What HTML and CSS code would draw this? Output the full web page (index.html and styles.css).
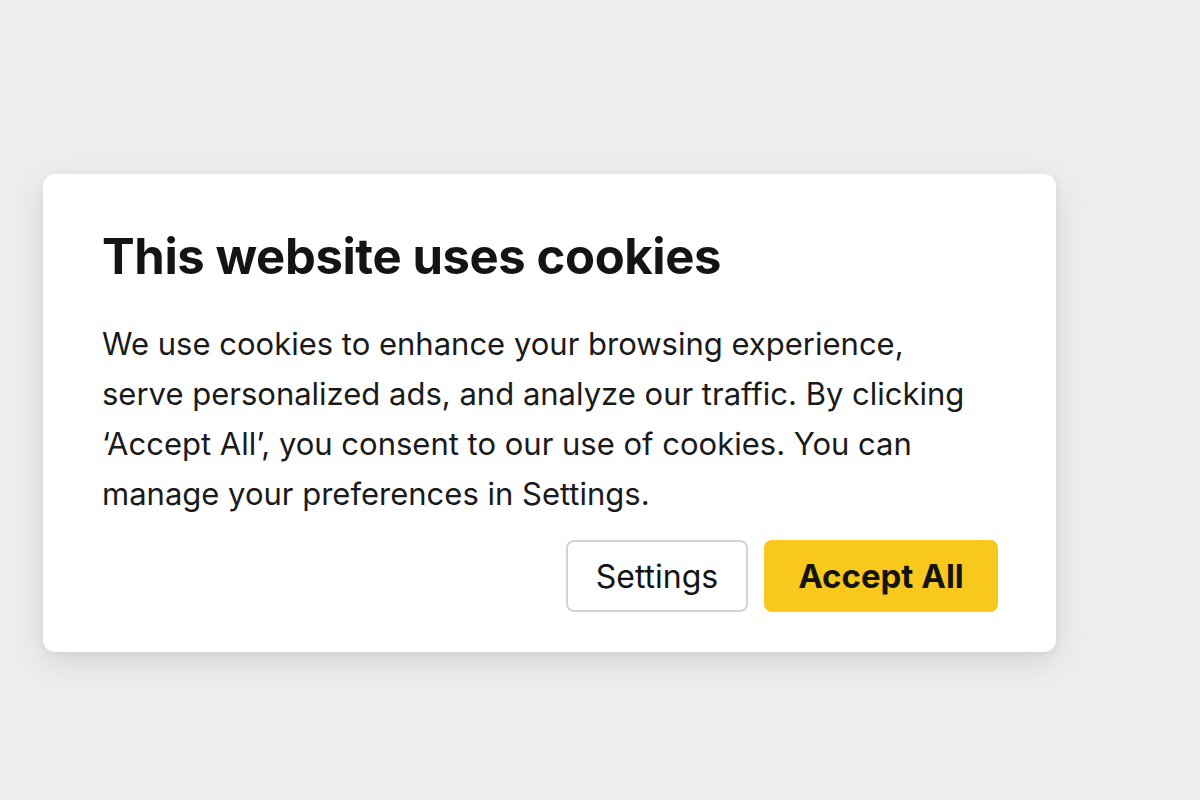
FILE: index.html
```html
<!DOCTYPE html>
<html lang="en">
<head>
    <meta charset="UTF-8">
    <meta name="viewport" content="width=device-width, initial-scale=1.0">
    <title>Cookie Consent</title>
    <link rel="stylesheet" href="styles.css">
</head>
<body>

    <div class="page">
        <div class="cookie-card">
            <h1>This website uses cookies</h1>
            <p>We use cookies to enhance your browsing experience, serve personalized ads, and analyze our traffic. By clicking &lsquo;Accept All&rsquo;, you consent to our use of cookies. You can manage your preferences in Settings.</p>
            <div class="actions">
                <button class="btn btn-settings">Settings</button>
                <button class="btn btn-accept">Accept All</button>
            </div>
        </div>
    </div>

</body>
</html>
```

FILE: styles.css
```css
body {
    margin: 0;
    background-color: #eeedeb;
    font-family: Inter, "Noto Sans", Arial, sans-serif;
    color: #1a1a1a;
}
.page {
    padding: 174px 0 0 43px;
    height: 800px;
    box-sizing: border-box;
}
.cookie-card {
    width: 1013px;
    box-sizing: border-box;
    padding: 53px 58px 40px 59px;
    background-color: #ffffff;
    border-radius: 12px;
    box-shadow: 0 10px 30px rgba(0, 0, 0, 0.10), 0 2px 6px rgba(0, 0, 0, 0.05);
}
.cookie-card h1 {
    margin: 0;
    font-size: 49px;
    line-height: 60px;
    font-weight: 700;
    color: #141414;
    letter-spacing: -0.4px;
}
.cookie-card p {
    margin: 32px 0 0 0;
    font-size: 31px;
    line-height: 50px;
    width: 880px;
}
.actions {
    display: flex;
    justify-content: flex-end;
    gap: 16px;
    margin-top: 21px;
}
.btn {
    height: 72px;
    border-radius: 8px;
    font-family: inherit;
    font-size: 32px;
    color: #141414;
    cursor: pointer;
}
.btn-settings {
    width: 182px;
    background-color: #ffffff;
    border: 2px solid #d2d2d2;
}
.btn-accept {
    width: 234px;
    background-color: #f9c81c;
    border: none;
    font-weight: 700;
    font-size: 33px;
}
```
